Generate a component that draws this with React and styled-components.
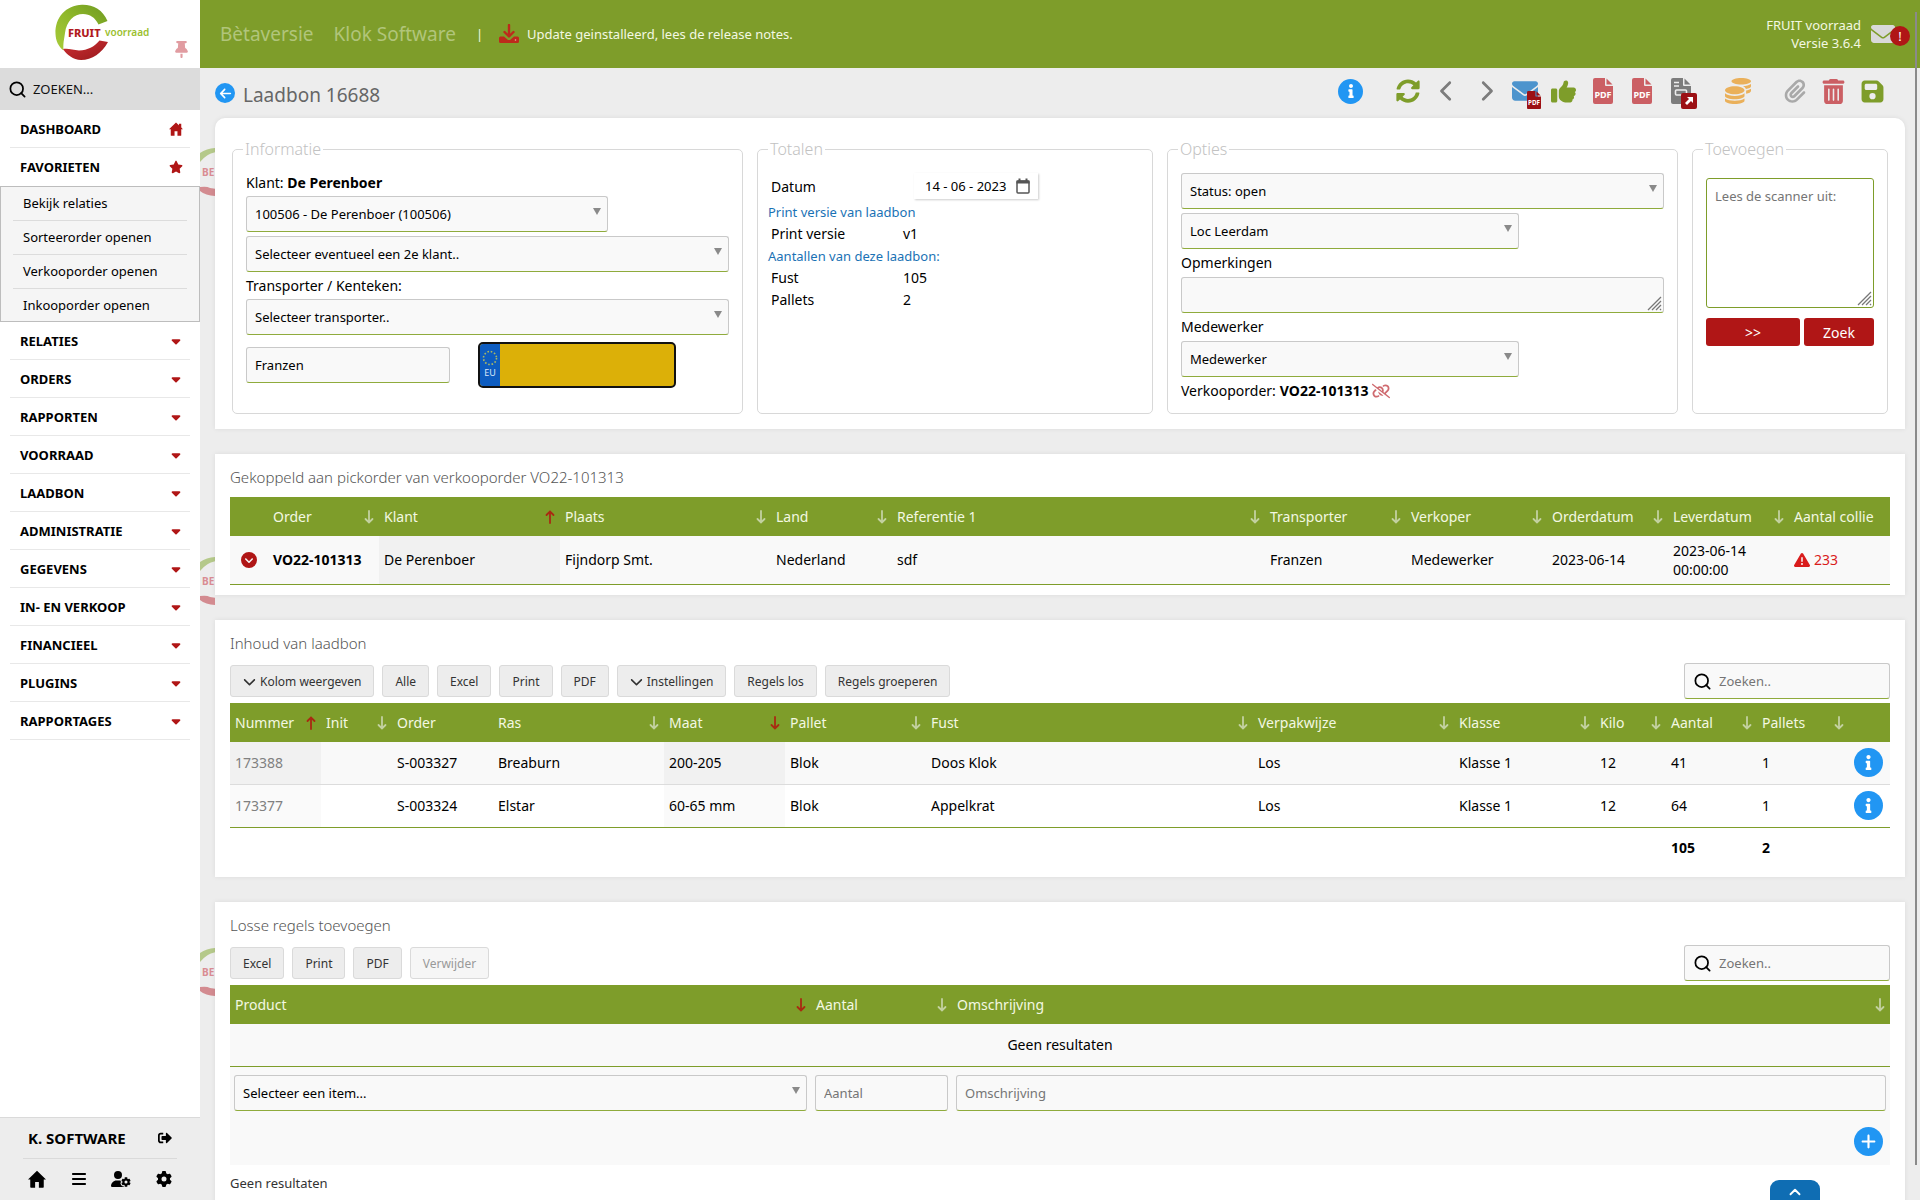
import React, { useState } from 'react';
import styled, { createGlobalStyle, css } from 'styled-components';
import {
  FaThumbtack, FaStar, FaCaretDown, FaBars, FaUserGear, FaGear, FaEnvelope, FaChevronLeft, FaChevronRight,
  FaChevronDown, FaThumbsUp, FaPaperclip, FaTrashCan, FaFloppyDisk, FaLinkSlash, FaCircleChevronDown,
  FaTriangleExclamation, FaPlus, FaArrowLeft,
} from 'react-icons/fa6';
import { FaSyncAlt, FaCoins, FaSignOutAlt, FaInfo } from 'react-icons/fa';
import { Search, ChevronUp } from 'lucide-react';

const green = '#7e9d2a';
const red = '#b01616';
const blue = '#2196f3';

const GlobalStyle = createGlobalStyle`
  * { box-sizing: border-box; }
  body {
    margin: 0;
    background: #ededed;
    color: #000;
    font-family: 'Noto Sans', sans-serif;
    font-size: 14px;
    line-height: 20px;
  }
  input, select, textarea, button { font-family: inherit; }
  a { color: inherit; text-decoration: none; }
`;

const Shell = styled.div`
  display: flex;
  height: 100vh;
  overflow: hidden;
`;

/* ---------- sidebar ---------- */

const Sidebar = styled.aside`
  display: flex;
  flex-direction: column;
  flex: none;
  width: 200px;
  background: #fff;
`;

const LogoArea = styled.div`
  display: flex;
  align-items: flex-end;
  justify-content: space-between;
  height: 68px;
  padding: 0 10px 8px 52px;
`;

const PinButton = styled.button`
  padding: 0;
  border: 0;
  background: none;
  color: #e19ca1;
  font-size: 17px;
  line-height: 1;
`;

const MenuSearch = styled.label`
  display: flex;
  align-items: center;
  gap: 6px;
  height: 42px;
  padding: 0 8px;
  background: #dcdcdc;

  input {
    flex: 1;
    min-width: 0;
    padding: 0;
    border: 0;
    outline: 0;
    background: none;
    font-size: 13px;
  }
  input::placeholder { color: #111; opacity: 1; }
`;

const Menu = styled.nav`
  flex: 1;
`;

const MenuItem = styled.a`
  display: flex;
  align-items: center;
  justify-content: space-between;
  height: 38px;
  margin: 0 10px;
  padding: 0 7px 0 10px;
  border-bottom: 1px solid ${(p) => (p.$open ? 'transparent' : '#e8e8e8')};
  font-size: 13px;
  font-weight: 700;

  svg { width: 14px; color: ${red}; font-size: 14px; }
`;

const SubMenu = styled.div`
  padding: 0 12px;
  border: 1px solid #bdbdbd;
  background: #f5f5f5;
`;

const SubItem = styled.a`
  display: block;
  padding: 6px 10px 7px;
  border-bottom: 1px solid #dcdcdc;
  font-size: 13px;

  &:last-child { padding-bottom: 6px; border-bottom: 0; }
`;

const SideFooter = styled.footer`
  padding: 0 23px;
  border-top: 1px solid #dadada;
  background: #ededed;
`;

const UserRow = styled.div`
  display: flex;
  align-items: center;
  justify-content: space-between;
  height: 41px;
  padding: 0 5px;
  border-bottom: 1px solid #dadada;
  font-size: 15px;
  font-weight: 700;
`;

const FooterIcons = styled.div`
  display: flex;
  align-items: center;
  justify-content: space-between;
  height: 41px;
  padding: 0 5px 2px;
`;

const FooterButton = styled.button`
  display: flex;
  padding: 0;
  border: 0;
  background: none;
  color: #000;
  font-size: ${(p) => p.$size || 16}px;
`;

/* ---------- top bar ---------- */

const Content = styled.div`
  display: flex;
  flex-direction: column;
  flex: 1;
  min-width: 0;
`;

const TopBar = styled.header`
  display: flex;
  align-items: center;
  flex: none;
  height: 68px;
  padding: 0 10px 0 20px;
  background: ${green};
  color: #f3f8e2;
  font-size: 13px;
`;

const Brand = styled.span`
  margin-right: 20px;
  color: #b1c57b;
  font-size: 19px;
`;

const Notice = styled.a`
  display: flex;
  align-items: center;
  gap: 8px;
  margin-left: 16px;
`;

const Version = styled.div`
  margin-left: auto;
  line-height: 18px;
  text-align: right;
`;

const MailButton = styled.button`
  position: relative;
  display: flex;
  margin-left: 10px;
  padding: 0 15px 0 0;
  border: 0;
  background: none;
  color: #d9d9d9;
  font-size: 24px;
`;

const MailBadge = styled.span`
  position: absolute;
  top: 4px;
  right: 0;
  width: 20px;
  border-radius: 10px;
  background: ${red};
  color: #fff;
  font-size: 13px;
  line-height: 20px;
`;

/* ---------- page ---------- */

const Page = styled.main`
  position: relative;
  isolation: isolate;
  display: flex;
  flex-direction: column;
  gap: 25px;
  flex: 1;
  min-height: 0;
  padding: 0 15px;
  overflow-y: auto;
  scrollbar-width: none;
`;

const Watermark = styled.svg`
  position: absolute;
  z-index: -1;
  top: ${(p) => p.$top}px;
  left: 0;
`;

const TitleBar = styled.div`
  display: flex;
  align-items: center;
  flex: none;
  gap: 8px;
  height: 50px;
  margin-bottom: -25px;
`;

const PageTitle = styled.h1`
  margin: 4px auto 0 0;
  color: #666;
  font-size: 19px;
  font-weight: 400;
`;

const Actions = styled.div`
  display: flex;
  align-items: center;
  padding: 0 13px 4px 0;
`;

const Action = styled.button`
  position: relative;
  display: flex;
  align-items: center;
  justify-content: center;
  width: 39px;
  height: 34px;
  margin-right: ${(p) => (p.$space ? 18 : 0)}px;
  padding: 0;
  border: 0;
  background: none;
  color: ${(p) => p.$color};
  font-size: ${(p) => p.$size || 24}px;
`;

const ActionBadge = styled.span`
  position: absolute;
  right: 3px;
  bottom: -1px;
  display: flex;
`;

const Round = styled.button`
  display: flex;
  align-items: center;
  justify-content: center;
  flex: none;
  width: ${(p) => p.$size}px;
  height: ${(p) => p.$size}px;
  padding: 0;
  border: 0;
  border-radius: 50%;
  background: ${blue};
  color: #fff;
  font-size: ${(p) => p.$icon || 14}px;
`;

const Card = styled.section`
  flex: none;
  padding: 12px 15px 10px;
  background: #fff;
  box-shadow: 0 0 5px rgba(0, 0, 0, 0.08);
`;

const FormCard = styled(Card)`
  display: grid;
  grid-template-columns: 511fr 396fr 511fr 196fr;
  gap: 14px;
  padding: 20px 17px 15px;
  border-radius: 10px 10px 0 0;
`;

const LastCard = styled(Card)`
  padding-bottom: 60px;
`;

const Group = styled.fieldset`
  min-width: 0;
  margin: 0;
  padding: 0 10px;
  border: 1px solid #d8d8d8;
  border-radius: 5px;

  legend {
    padding: 0 2px;
    color: #c2c2c2;
    font-size: 16px;
    font-weight: 300;
    line-height: 22px;
  }
`;

const Fields = styled.div`
  display: flex;
  flex-direction: column;
  gap: ${(p) => (p.$tight ? 0 : 4)}px;
  padding: 13px ${(p) => (p.$tight ? 0 : 3)}px 12px;
`;

const Caption = styled.div`
  line-height: 19px;
`;

const field = css`
  width: 100%;
  height: 36px;
  padding: 0 8px;
  border: 1px solid #c9c9c9;
  border-bottom-color: #8fab3c;
  border-radius: 3px;
  outline: 0;
  background: #f9f9f9;
  color: #000;
  font-size: 13px;
`;

const Input = styled.input`
  ${field}
  &::placeholder { color: #757575; }
`;

const SelectWrap = styled.div`
  position: relative;
  width: ${(p) => p.$width || '100%'};

  &::after {
    content: '';
    position: absolute;
    top: 12px;
    right: 7px;
    border: 4px solid transparent;
    border-top: 7px solid #8a8a8a;
    border-bottom: 0;
    pointer-events: none;
  }
`;

const SelectBox = styled.select`
  ${field}
  appearance: none;
`;

const TransportRow = styled.div`
  display: flex;
  align-items: center;
  gap: 28px;
  padding-top: 3px;

  ${Input} { width: 204px; }
`;

const Plate = styled.label`
  display: flex;
  width: 198px;
  height: 46px;
  overflow: hidden;
  border: 2px solid #111;
  border-radius: 5px;
  background: #dcb008;

  input {
    flex: 1;
    min-width: 0;
    border: 0;
    outline: 0;
    background: none;
    font-size: 20px;
  }
`;

const PlateBand = styled.span`
  display: flex;
  flex-direction: column;
  align-items: center;
  width: 20px;
  padding-top: 6px;
  background: #0d5cc0;
  color: #d8e6f8;
  font-size: 9px;
  line-height: 14px;
`;

const AreaWrap = styled.div`
  position: relative;
  display: flex;

  svg {
    position: absolute;
    right: 2px;
    bottom: 2px;
    pointer-events: none;
  }
`;

const Remarks = styled.textarea`
  ${field}
  padding: 8px;
  resize: none;
`;

const Scanner = styled(Remarks)`
  height: 130px;
  border-color: ${green};
  background: #fff;

  &::placeholder { color: #757575; }
`;

const ScanFields = styled(Fields)`
  gap: 10px;
  padding-top: 18px;
`;

const ScanButtons = styled.div`
  display: grid;
  grid-template-columns: 94fr 70fr;
  gap: 4px;
`;

const RedButton = styled.button`
  height: 28px;
  padding: 0;
  border: 0;
  border-radius: 3px;
  background: ${red};
  color: #fff;
  font-size: 14px;
`;

const TotalRow = styled.div`
  display: grid;
  grid-template-columns: 132px 1fr;
  align-items: center;
  padding-left: 3px;
  line-height: 22px;
`;

const TotalNote = styled.div`
  color: #1a72b5;
  font-size: 13px;
  line-height: 22px;
`;

const DateField = styled.label`
  display: flex;
  align-items: center;
  width: 124px;
  height: 26px;
  margin: 0 0 2px 11px;
  padding: 0 8px 0 11px;
  box-shadow: 1px 1px 2px rgba(0, 0, 0, 0.2);

  input {
    flex: 1;
    min-width: 0;
    padding: 0;
    border: 0;
    outline: 0;
    font-size: 13px;
  }
`;

const OrderLine = styled.div`
  display: flex;
  align-items: center;
  gap: 4px;

  svg { color: #cf6a6f; font-size: 18px; }
`;

/* ---------- tables ---------- */

const Heading = styled.h2`
  margin: 0 0 9px;
  color: #555;
  font-size: 15px;
  font-weight: 300;
  line-height: 22px;
`;

const Tools = styled.div`
  display: flex;
  align-items: center;
  gap: 8px;
  margin-bottom: 4px;
`;

const ToolButton = styled.button`
  display: flex;
  align-items: center;
  gap: 4px;
  height: 32px;
  padding: 0 12px;
  border: 1px solid #dadada;
  border-radius: 3px;
  background: #ededed;
  color: #333;
  font-size: 12px;

  &:disabled { background: #f6f6f6; color: #999; }
`;

const TableSearch = styled.label`
  display: flex;
  align-items: center;
  gap: 7px;
  width: 206px;
  height: 36px;
  margin-left: auto;
  padding: 0 8px;
  border: 1px solid #c9c9c9;
  border-bottom-color: #8fab3c;
  border-radius: 3px;
  background: #f9f9f9;

  input {
    flex: 1;
    min-width: 0;
    padding: 0;
    border: 0;
    outline: 0;
    background: none;
    font-size: 13px;
  }
`;

const Th = styled.th`
  height: 39px;
  padding: 0 5px;
  background: ${green};
  color: #f3f8e2;
  font-weight: 400;
  text-align: left;
  white-space: nowrap;
`;

const ThInner = styled.span`
  display: flex;
  align-items: center;
  justify-content: space-between;
`;

const Td = styled.td`
  height: ${(p) => (p.$tall ? 49 : 43)}px;
  padding: 0 5px 1px;
  color: ${(p) => (p.$muted ? '#808080' : 'inherit')};
  background: ${(p) => (p.$sorted ? '#f1f1f1' : 'none')};
  font-weight: ${(p) => (p.$bold ? 700 : 400)};
  text-align: ${(p) => p.$align || 'left'};

  tr:nth-child(even) > & { background: ${(p) => (p.$sorted ? '#fafafa' : 'none')}; }
`;

const Table = styled.table`
  width: 100%;
  border-collapse: separate;
  border-spacing: 0;
  table-layout: fixed;
  line-height: 19px;

  tbody tr:nth-child(odd) { background: #f9f9f9; }
  tbody td { border-bottom: 1px solid #dcdcdc; }
  tbody tr:last-child td { border-bottom-color: ${green}; }
  tfoot td { height: 39px; font-weight: 700; }
`;

const IconCell = styled.span`
  display: flex;
  justify-content: center;
  color: ${red};
  font-size: 16px;
`;

const Warning = styled.span`
  display: flex;
  align-items: center;
  gap: 4px;
  color: #d91c1c;

  svg { font-size: 16px; }
`;

const NewRow = styled.form`
  display: grid;
  grid-template-columns: 573fr 133fr 930fr;
  gap: 8px;
  padding: 8px 4px 7px;
  background: #f9f9f9;
`;

const AddRow = styled.div`
  display: flex;
  justify-content: flex-end;
  padding: 9px 7px;
  background: #f9f9f9;
`;

const Result = styled.div`
  padding-top: 8px;
  color: #333;
  font-size: 13px;
`;

const ToTop = styled.button`
  position: fixed;
  right: 100px;
  bottom: 0;
  display: flex;
  justify-content: center;
  width: 50px;
  height: 20px;
  padding: 3px 0 0;
  border: 0;
  border-radius: 9px 9px 0 0;
  background: #0f6db3;
  color: #fff;
`;

const ScrollThumb = styled.div`
  position: fixed;
  top: 12px;
  right: 3px;
  bottom: 35px;
  width: 2px;
  background: #8a8a8a;
`;

/* ---------- drawings ---------- */

const Logo = () => (
  <svg width="98" height="60" viewBox="52 0 98 60" role="img" aria-label="FRUIT voorraad">
    <defs>
      <linearGradient id="leaf" x1="0" y1="1" x2="1" y2="0">
        <stop offset="0" stopColor="#a9cc3a" />
        <stop offset="0.5" stopColor="#8fb82a" />
        <stop offset="1" stopColor="#6f9a22" />
      </linearGradient>
      <linearGradient id="apple" x1="0" y1="0" x2="1" y2="1">
        <stop offset="0" stopColor="#cf3034" />
        <stop offset="1" stopColor="#97191c" />
      </linearGradient>
    </defs>
    <path d="M107.500 21C103 10 93 4.500 82 4.800C66 5.500 55 17 55.500 34C55.800 41 58.500 46.500 63.500 50.500C63 43 64 40 65 33C66.500 21 74 14 83 14C90 14 95 17.500 98.500 24.500Z" fill="url(#leaf)" />
    <path d="M108 42C102 53 92 60 81 60C73 59.500 67 55 63 49C68 48 73 50 79 50.500C88 50 94 47 99.500 40.500Z" fill="url(#apple)" />
    <text x="68" y="37" fontSize="11" fontWeight="800" fill="#b01a20">FRUIT</text>
    <text x="105" y="36" fontSize="10" fontWeight="600" fill="#9bbf2f">voorraad</text>
  </svg>
);

const Mark = ({ top }) => (
  <Watermark $top={top} width="15" height="48" viewBox="0 0 15 48" aria-hidden="true">
    <path d="M0 5Q7 0 16 0V4Q7 5 0 14Z" fill="#b5c98a" />
    <text x="2" y="28" fontSize="10" fontWeight="700" fill="#d98c93">BE</text>
    <path d="M0 39Q7 38 10 40L16 41V48Q6 48 0 43Z" fill="#d38b90" />
  </Watermark>
);

const House = ({ size = 16, chimney }) => (
  <svg width={size} height={size} viewBox="0 0 24 24" fill="currentColor" aria-hidden="true">
    <path d="M12 1L0 12.500H3V22.500Q3 23.500 4 23.500H9.500V16H14.500V23.500H20Q21 23.500 21 22.500V12.500H24Z" />
    {chimney && <path d="M17 3H21V11H17Z" />}
  </svg>
);

const Download = () => (
  <svg width="20" height="20" viewBox="0 0 20 20" fill="none" stroke="#bd2a1b" aria-hidden="true">
    <path d="M1.500 12.500H5L9 16H11L15 12.500H18.500Q20 12.500 20 14V17.500Q20 19 18.500 19H1.500Q0 19 0 17.500V14Q0 12.500 1.500 12.500Z" fill="#bd2a1b" stroke="none" />
    <path d="M10 1V12M5.500 8L10 12.500L14.500 8" strokeWidth="2.400" strokeLinecap="round" strokeLinejoin="round" />
    <circle cx="16.500" cy="16" r="0.800" fill="#e5b5a0" stroke="none" />
  </svg>
);

const PdfFile = ({ width = 20, color = '#cb5f64' }) => (
  <svg width={width} height={(width * 26) / 20} viewBox="0 0 20 26" aria-hidden="true">
    <path d="M2 0H12V7Q12 8 13 8H20V24Q20 26 18 26H2Q0 26 0 24V2Q0 0 2 0Z" fill={color} />
    <path d="M13.500 0.500L19.500 6.500H13.500Z" fill={color} />
    <text x="10" y="20" fontSize="9" fontWeight="700" textAnchor="middle" fill="#fff">PDF</text>
  </svg>
);

const Report = () => (
  <svg width="20" height="26" viewBox="0 0 20 26" aria-hidden="true">
    <path d="M2 0H12V7Q12 8 13 8H20V24Q20 26 18 26H2Q0 26 0 24V2Q0 0 2 0Z" fill="#7c7c7c" />
    <path d="M13.500 0.500L19.500 6.500H13.500Z" fill="#7c7c7c" />
    <path d="M3 4.500H8M3 8H8M11 21.500H17" stroke="#ededed" strokeWidth="1.500" />
    <rect x="4.500" y="12" width="11" height="5" rx="1" fill="none" stroke="#ededed" strokeWidth="1.600" />
  </svg>
);

const OpenBadge = () => (
  <svg width="16" height="16" viewBox="0 0 16 16" aria-hidden="true">
    <rect width="16" height="16" rx="2" fill="#9c1014" />
    <path d="M6 4H12V10L10 8L6 12L4 10L8 6Z" fill="#fff" />
  </svg>
);

const Calendar = () => (
  <svg width="14" height="16" viewBox="0 0 14 16" aria-hidden="true">
    <rect x="1" y="3" width="12" height="12" rx="1" fill="none" stroke="#555" strokeWidth="1.500" />
    <path d="M0.500 2.500H13.500V5.500H0.500ZM2.500 0.500H4.500V3H2.500ZM9.500 0.500H11.500V3H9.500Z" fill="#555" />
  </svg>
);

const Stars = () => (
  <svg width="16" height="16" viewBox="0 0 16 16" aria-hidden="true">
    <circle cx="8" cy="8" r="6.500" fill="none" stroke="#a9b764" strokeWidth="1.600" strokeDasharray="1.600 1.800" />
  </svg>
);

const Grip = () => (
  <svg width="15" height="15" viewBox="0 0 15 15" aria-hidden="true">
    <path d="M1 14L14 1M5 14L14 5M9 14L14 9M13 14L14 13" stroke="#777" strokeWidth="1.300" />
  </svg>
);

const Arrow = ({ dir, active }) => (
  <svg width="10" height="14" viewBox="0 0 10 14" fill="none" stroke={active ? '#a92a12' : '#c3d1a0'} strokeWidth="1.800" strokeLinecap="round" aria-hidden="true">
    {dir === 'up' ? <path d="M5 13V1.500M1.500 5L5 1.500L8.500 5" /> : <path d="M5 1V12.500M1.500 9L5 12.500L8.500 9" />}
  </svg>
);

/* ---------- composed parts ---------- */

const Select = ({ label, value, width }) => (
  <SelectWrap $width={width}>
    <SelectBox aria-label={label} defaultValue={value}>
      <option>{value}</option>
    </SelectBox>
  </SelectWrap>
);

const SearchField = () => (
  <TableSearch>
    <Search size={19} strokeWidth={2.2} />
    <input type="search" placeholder="Zoeken.." aria-label="Zoeken" />
  </TableSearch>
);

const Head = ({ columns }) => (
  <>
    <colgroup>
      {columns.map((c, i) => <col key={i} width={c.width} />)}
    </colgroup>
    <thead>
      <tr>
        {columns.map((c, i) => (
          <Th key={i} scope="col">
            <ThInner>
              <span>{c.name}</span>
              {c.sort && <Arrow dir={c.sort} active={c.active} />}
            </ThInner>
          </Th>
        ))}
      </tr>
    </thead>
  </>
);

const menuItems = [
  'RELATIES', 'ORDERS', 'RAPPORTEN', 'VOORRAAD', 'LAADBON', 'ADMINISTRATIE', 'GEGEVENS',
  'IN- EN VERKOOP', 'FINANCIEEL', 'PLUGINS', 'RAPPORTAGES',
];

const favorites = ['Bekijk relaties', 'Sorteerorder openen', 'Verkooporder openen', 'Inkooporder openen'];

const orderColumns = [
  { name: '', width: 38 },
  { name: 'Order', width: 111, sort: 'down' },
  { name: 'Klant', width: 181, sort: 'up', active: true },
  { name: 'Plaats', width: 211, sort: 'down' },
  { name: 'Land', width: 121, sort: 'down' },
  { name: 'Referentie 1', width: 373, sort: 'down' },
  { name: 'Transporter', width: 141, sort: 'down' },
  { name: 'Verkoper', width: 141, sort: 'down' },
  { name: 'Orderdatum', width: 121, sort: 'down' },
  { name: 'Leverdatum', width: 121, sort: 'down' },
  { name: 'Aantal collie', width: 101 },
];

const contentColumns = [
  { name: 'Nummer', width: 91, sort: 'up', active: true },
  { name: 'Init', width: 71, sort: 'down' },
  { name: 'Order', width: 101 },
  { name: 'Ras', width: 171, sort: 'down' },
  { name: 'Maat', width: 121, sort: 'down', active: true },
  { name: 'Pallet', width: 141, sort: 'down' },
  { name: 'Fust', width: 327, sort: 'down' },
  { name: 'Verpakwijze', width: 201, sort: 'down' },
  { name: 'Klasse', width: 141, sort: 'down' },
  { name: 'Kilo', width: 71, sort: 'down' },
  { name: 'Aantal', width: 91, sort: 'down' },
  { name: 'Pallets', width: 92, sort: 'down' },
  { name: '', width: 41 },
];

const contentRows = [
  ['173388', '', 'S-003327', 'Breaburn', '200-205', 'Blok', 'Doos Klok', 'Los', 'Klasse 1', '12', '41', '1'],
  ['173377', '', 'S-003324', 'Elstar', '60-65 mm', 'Blok', 'Appelkrat', 'Los', 'Klasse 1', '12', '64', '1'],
];

const looseColumns = [
  { name: 'Product', width: 581, sort: 'down', active: true },
  { name: 'Aantal', width: 141, sort: 'down' },
  { name: 'Omschrijving', width: 938, sort: 'down' },
];

const App = () => {
  const [date, setDate] = useState('14 - 06 - 2023');
  const [driver, setDriver] = useState('Franzen');

  return (
    <Shell>
      <GlobalStyle />
      <Sidebar>
        <LogoArea>
          <Logo />
          <PinButton aria-label="Menu vastzetten"><FaThumbtack /></PinButton>
        </LogoArea>
        <MenuSearch>
          <Search size={19} strokeWidth={2.2} />
          <input placeholder="ZOEKEN..." aria-label="Zoeken in menu" />
        </MenuSearch>
        <Menu>
          <MenuItem href="#dashboard">DASHBOARD<House size={14} chimney /></MenuItem>
          <MenuItem href="#favorieten" $open>FAVORIETEN<FaStar /></MenuItem>
          <SubMenu>
            {favorites.map((f) => <SubItem key={f} href="#favoriet">{f}</SubItem>)}
          </SubMenu>
          {menuItems.map((m) => (
            <MenuItem key={m} href="#menu">{m}<FaCaretDown /></MenuItem>
          ))}
        </Menu>
        <SideFooter>
          <UserRow>
            K. SOFTWARE
            <FooterButton $size={14} aria-label="Uitloggen"><FaSignOutAlt /></FooterButton>
          </UserRow>
          <FooterIcons>
            <FooterButton aria-label="Home"><House size={18} /></FooterButton>
            <FooterButton aria-label="Menu"><FaBars /></FooterButton>
            <FooterButton $size={20} aria-label="Gebruiker"><FaUserGear /></FooterButton>
            <FooterButton aria-label="Instellingen"><FaGear /></FooterButton>
          </FooterIcons>
        </SideFooter>
      </Sidebar>

      <Content>
        <TopBar>
          <Brand>Bètaversie</Brand>
          <Brand>Klok Software</Brand>
          <span>|</span>
          <Notice href="#notes"><Download />Update geinstalleerd, lees de release notes.</Notice>
          <Version>FRUIT voorraad<br />Versie 3.6.4</Version>
          <MailButton aria-label="Berichten">
            <FaEnvelope />
            <MailBadge>!</MailBadge>
          </MailButton>
        </TopBar>

        <Page>
          <Mark top={80} />
          <Mark top={489} />
          <Mark top={880} />

          <TitleBar>
            <Round $size={20} $icon={13} aria-label="Terug"><FaArrowLeft /></Round>
            <PageTitle>Laadbon 16688</PageTitle>
            <Actions>
              <Action as="div" $space><Round $size={25} aria-label="Info"><FaInfo /></Round></Action>
              <Action $color={green} aria-label="Vernieuwen"><FaSyncAlt /></Action>
              <Action $color="#7c7c7c" $size={22} aria-label="Vorige"><FaChevronLeft /></Action>
              <Action $color="#7c7c7c" $size={22} aria-label="Volgende"><FaChevronRight /></Action>
              <Action $color="#4d94cd" $size={26} aria-label="Mail PDF">
                <FaEnvelope />
                <ActionBadge><PdfFile width={14} color="#9c1014" /></ActionBadge>
              </Action>
              <Action $color={green} $size={25} aria-label="Akkoord"><FaThumbsUp /></Action>
              <Action aria-label="PDF"><PdfFile /></Action>
              <Action aria-label="PDF"><PdfFile /></Action>
              <Action $space aria-label="Rapport openen">
                <Report />
                <ActionBadge><OpenBadge /></ActionBadge>
              </Action>
              <Action $color="#eab05a" $size={26} $space aria-label="Kosten"><FaCoins /></Action>
              <Action $color="#a9a9a9" aria-label="Bijlage"><FaPaperclip /></Action>
              <Action $color="#cb5f64" $size={25} aria-label="Verwijderen"><FaTrashCan /></Action>
              <Action $color={green} $size={25} aria-label="Opslaan"><FaFloppyDisk /></Action>
            </Actions>
          </TitleBar>

          <FormCard>
            <Group>
              <legend>Informatie</legend>
              <Fields>
                <Caption>Klant: <b>De Perenboer</b></Caption>
                <Select label="Klant" value="100506 - De Perenboer (100506)" width="75%" />
                <Select label="Tweede klant" value="Selecteer eventueel een 2e klant.." />
                <Caption>Transporter / Kenteken:</Caption>
                <Select label="Transporter" value="Selecteer transporter.." />
                <TransportRow>
                  <Input aria-label="Chauffeur" value={driver} onChange={(e) => setDriver(e.target.value)} />
                  <Plate>
                    <PlateBand><Stars />EU</PlateBand>
                    <input aria-label="Kenteken" />
                  </Plate>
                </TransportRow>
              </Fields>
            </Group>

            <Group>
              <legend>Totalen</legend>
              <Fields $tight>
                <TotalRow>
                  <span>Datum</span>
                  <DateField>
                    <input aria-label="Datum" value={date} onChange={(e) => setDate(e.target.value)} />
                    <Calendar />
                  </DateField>
                </TotalRow>
                <TotalNote>Print versie van laadbon</TotalNote>
                <TotalRow><span>Print versie</span><span>v1</span></TotalRow>
                <TotalNote>Aantallen van deze laadbon:</TotalNote>
                <TotalRow><span>Fust</span><span>105</span></TotalRow>
                <TotalRow><span>Pallets</span><span>2</span></TotalRow>
              </Fields>
            </Group>

            <Group>
              <legend>Opties</legend>
              <Fields>
                <Select label="Status" value="Status: open" />
                <Select label="Locatie" value="Loc Leerdam" width="70%" />
                <label htmlFor="remarks">Opmerkingen</label>
                <AreaWrap><Remarks id="remarks" /><Grip /></AreaWrap>
                <div>Medewerker</div>
                <Select label="Medewerker" value="Medewerker" width="70%" />
                <OrderLine>Verkooporder: <b>VO22-101313</b> <FaLinkSlash /></OrderLine>
              </Fields>
            </Group>

            <Group>
              <legend>Toevoegen</legend>
              <ScanFields>
                <AreaWrap>
                  <Scanner placeholder="Lees de scanner uit:" aria-label="Scanner" />
                  <Grip />
                </AreaWrap>
                <ScanButtons>
                  <RedButton>&gt;&gt;</RedButton>
                  <RedButton>Zoek</RedButton>
                </ScanButtons>
              </ScanFields>
            </Group>
          </FormCard>

          <Card>
            <Heading>Gekoppeld aan pickorder van verkooporder VO22-101313</Heading>
            <Table>
              <Head columns={orderColumns} />
              <tbody>
                <tr>
                  <Td $tall><IconCell><FaCircleChevronDown /></IconCell></Td>
                  <Td $tall $bold>VO22-101313</Td>
                  <Td $tall $sorted>De Perenboer</Td>
                  <Td $tall>Fijndorp Smt.</Td>
                  <Td $tall>Nederland</Td>
                  <Td $tall>sdf</Td>
                  <Td $tall>Franzen</Td>
                  <Td $tall>Medewerker</Td>
                  <Td $tall>2023-06-14</Td>
                  <Td $tall>2023-06-14<br />00:00:00</Td>
                  <Td $tall><Warning><FaTriangleExclamation />233</Warning></Td>
                </tr>
              </tbody>
            </Table>
          </Card>

          <Card>
            <Heading>Inhoud van laadbon</Heading>
            <Tools>
              <ToolButton><FaChevronDown size={13} />Kolom weergeven</ToolButton>
              <ToolButton>Alle</ToolButton>
              <ToolButton>Excel</ToolButton>
              <ToolButton>Print</ToolButton>
              <ToolButton>PDF</ToolButton>
              <ToolButton><FaChevronDown size={13} />Instellingen</ToolButton>
              <ToolButton>Regels los</ToolButton>
              <ToolButton>Regels groeperen</ToolButton>
              <SearchField />
            </Tools>
            <Table>
              <Head columns={contentColumns} />
              <tbody>
                {contentRows.map((row) => (
                  <tr key={row[0]}>
                    {row.map((cell, i) => (
                      <Td key={i} $muted={i === 0} $sorted={i === 0 || i === 4}>{cell}</Td>
                    ))}
                    <Td><Round $size={29} $icon={15} aria-label="Info"><FaInfo /></Round></Td>
                  </tr>
                ))}
              </tbody>
              <tfoot>
                <tr>
                  <td colSpan={10} />
                  <Td as="td" $bold>105</Td>
                  <Td as="td" $bold>2</Td>
                  <td />
                </tr>
              </tfoot>
            </Table>
          </Card>

          <LastCard>
            <Heading>Losse regels toevoegen</Heading>
            <Tools>
              <ToolButton>Excel</ToolButton>
              <ToolButton>Print</ToolButton>
              <ToolButton>PDF</ToolButton>
              <ToolButton disabled>Verwijder</ToolButton>
              <SearchField />
            </Tools>
            <Table>
              <Head columns={looseColumns} />
              <tbody>
                <tr><Td colSpan={3} $align="center">Geen resultaten</Td></tr>
              </tbody>
            </Table>
            <NewRow>
              <Select label="Item" value="Selecteer een item..." />
              <Input placeholder="Aantal" aria-label="Aantal" />
              <Input placeholder="Omschrijving" aria-label="Omschrijving" />
            </NewRow>
            <AddRow><Round $size={29} $icon={17} aria-label="Toevoegen"><FaPlus /></Round></AddRow>
            <Result>Geen resultaten</Result>
          </LastCard>
        </Page>
      </Content>

      <ToTop aria-label="Naar boven"><ChevronUp size={18} strokeWidth={2.5} /></ToTop>
      <ScrollThumb />
    </Shell>
  );
};

export default App;
